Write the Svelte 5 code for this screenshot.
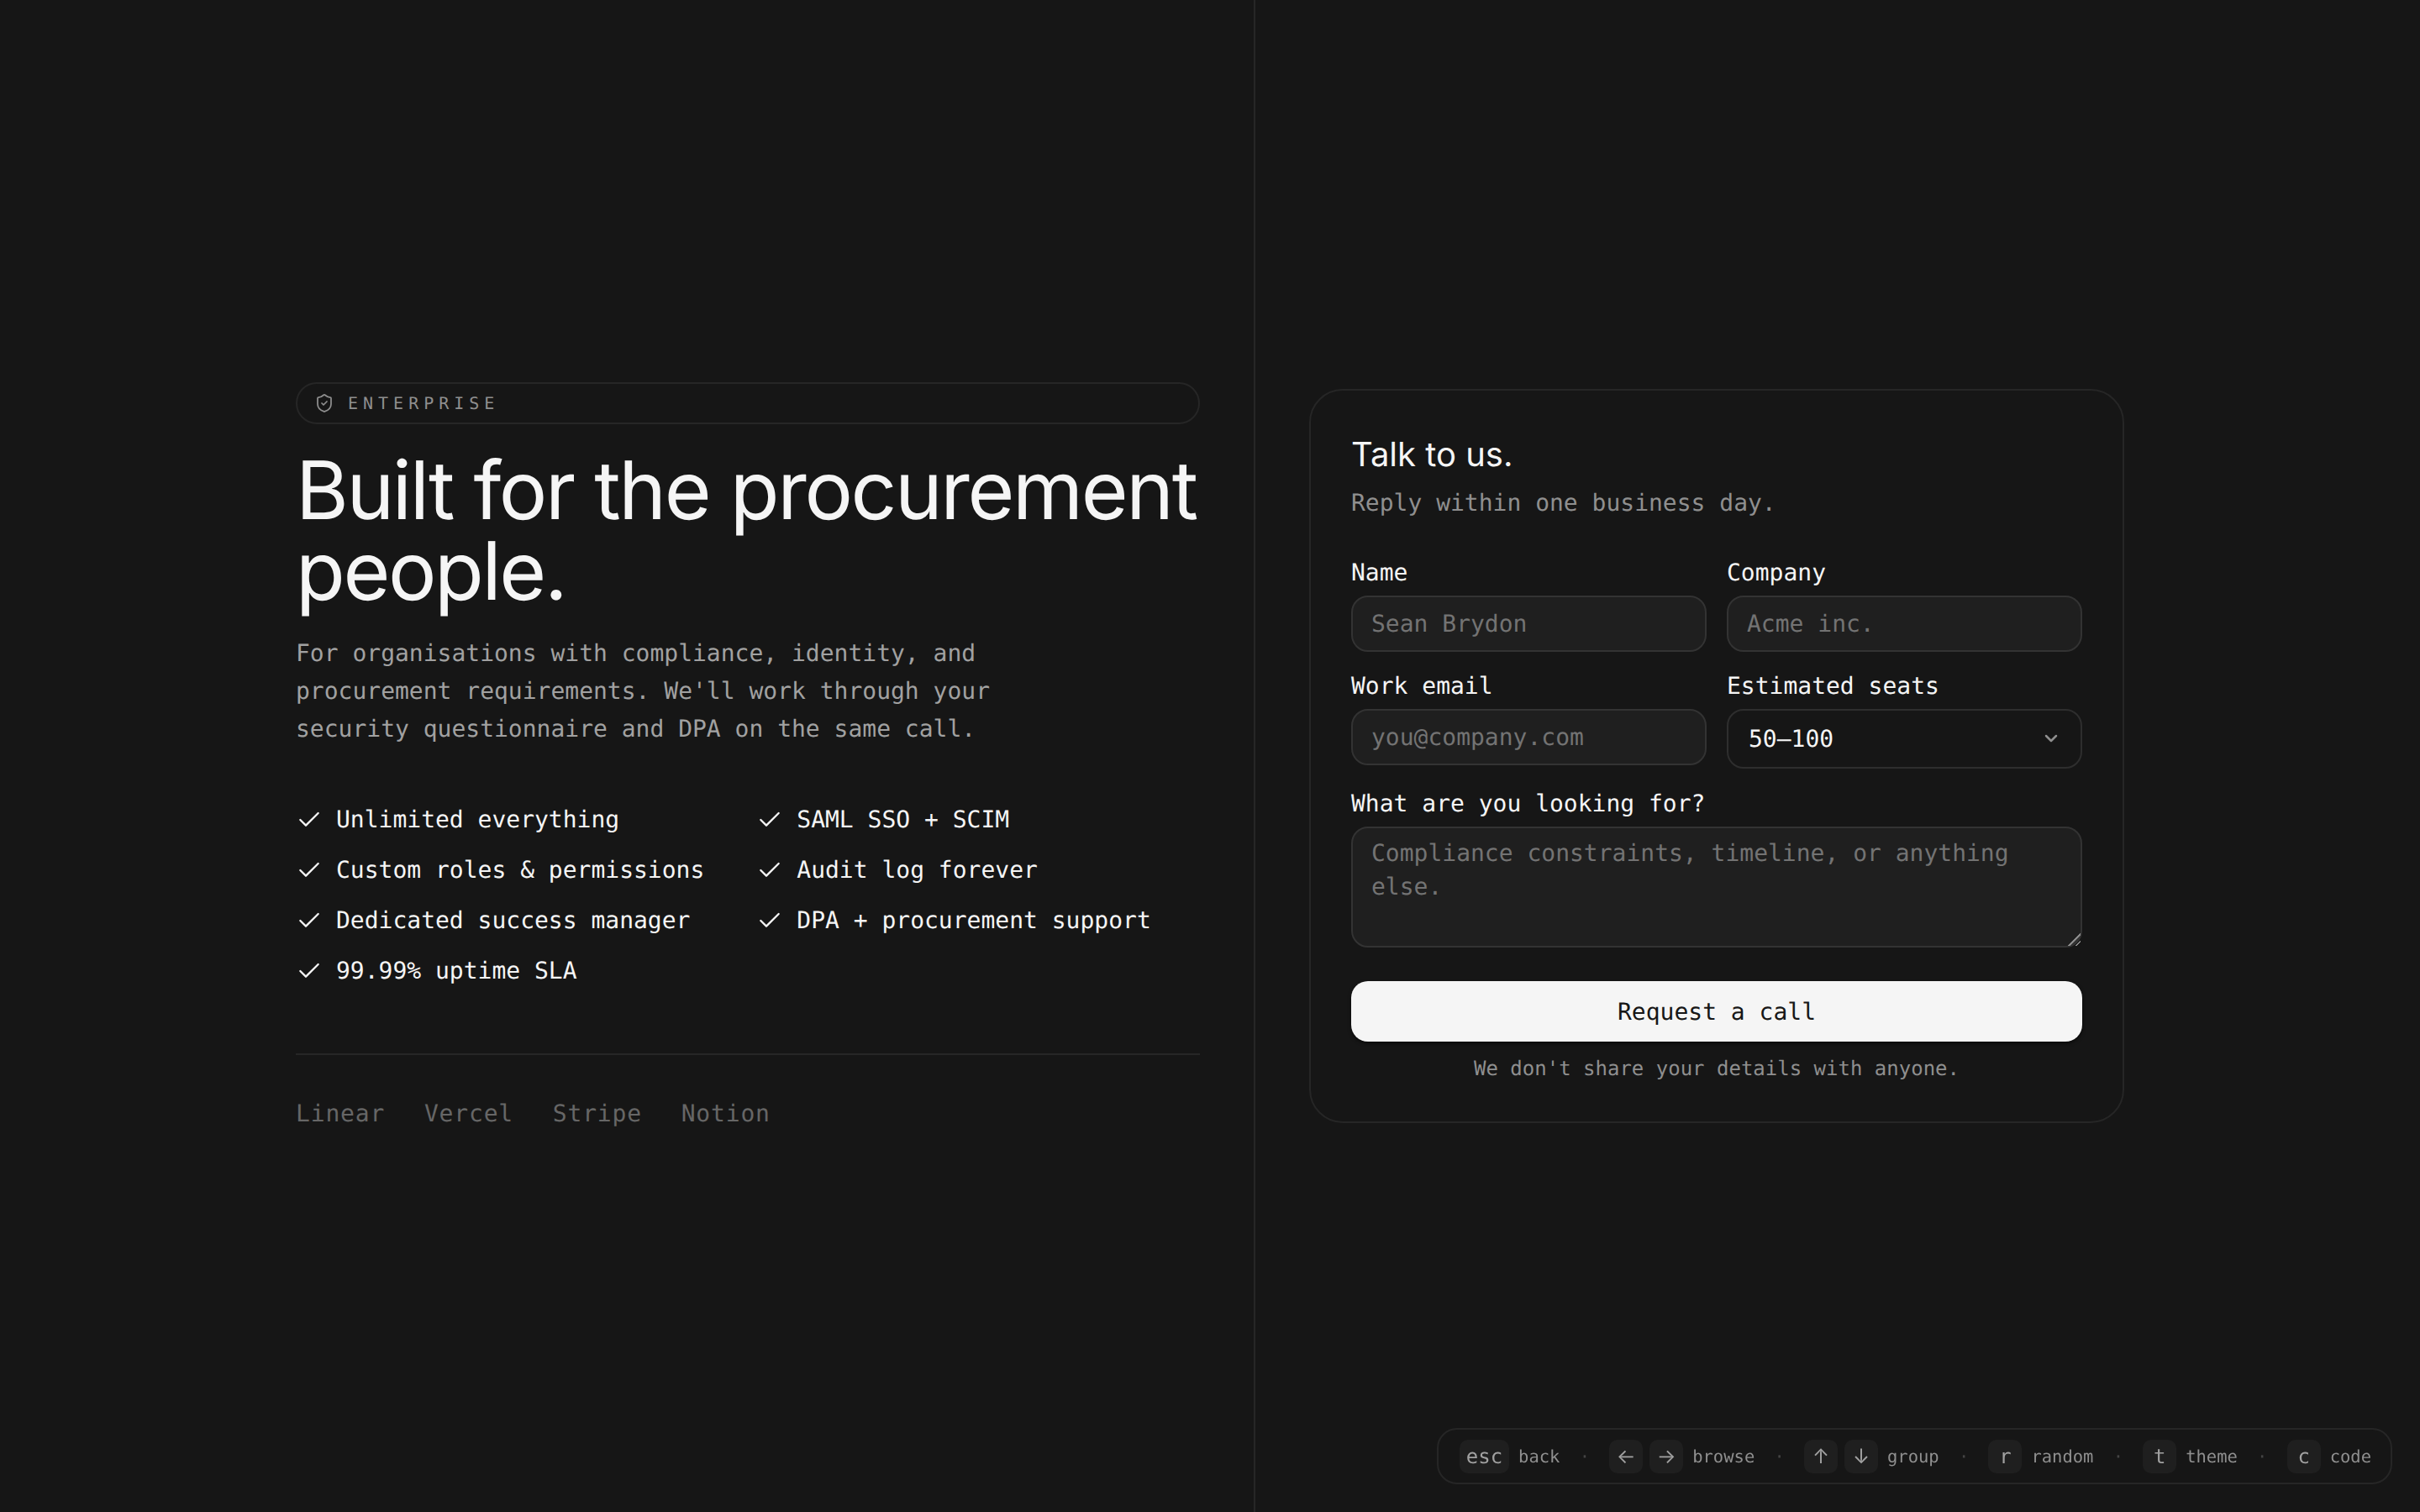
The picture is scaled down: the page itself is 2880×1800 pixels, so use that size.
<script>
  const features = [
    'Unlimited everything',
    'SAML SSO + SCIM',
    'Custom roles & permissions',
    'Audit log forever',
    'Dedicated success manager',
    'DPA + procurement support',
    '99.99% uptime SLA'
  ];

  const logos = ['Linear', 'Vercel', 'Stripe', 'Notion'];

  const hints = [
    { keys: ['esc'], label: 'back' },
    { keys: ['←', '→'], label: 'browse' },
    { keys: ['↑', '↓'], label: 'group' },
    { keys: ['r'], label: 'random' },
    { keys: ['t'], label: 'theme' },
    { keys: ['c'], label: 'code' }
  ];

  const arrows = '←→↑↓';
</script>

<main class="page">
  <section class="pitch">
    <div class="badge">
      <svg class="shield" viewBox="0 0 24 24" aria-hidden="true">
        <path d="M20 13c0 5-3.5 7.5-7.66 8.95a1 1 0 0 1-.67-.01C7.5 20.5 4 18 4 13V6a1 1 0 0 1 1-1c2 0 4.5-1.2 6.24-2.72a1.17 1.17 0 0 1 1.52 0C14.51 3.81 17 5 19 5a1 1 0 0 1 1 1z" />
        <path d="m9 12 2 2 4-4" />
      </svg>
      <span>ENTERPRISE</span>
    </div>

    <h1>Built for the procurement people.</h1>

    <p class="lede">
      For organisations with compliance, identity, and procurement requirements. We'll work through your security questionnaire and DPA on the same call.
    </p>

    <ul class="features">
      {#each features as feature}
        <li>
          <svg class="check" viewBox="0 0 24 24" aria-hidden="true">
            <path d="M20 6 9 17l-5-5" />
          </svg>
          {feature}
        </li>
      {/each}
    </ul>

    <div class="logos">
      {#each logos as logo}
        <span>{logo}</span>
      {/each}
    </div>
  </section>

  <section class="contact">
    <form class="card" onsubmit={(e) => e.preventDefault()}>
      <h2>Talk to us.</h2>
      <p class="sub">Reply within one business day.</p>

      <div class="fields">
        <label class="field">
          <span>Name</span>
          <input type="text" placeholder="Sean Brydon" />
        </label>
        <label class="field">
          <span>Company</span>
          <input type="text" placeholder="Acme inc." />
        </label>
        <label class="field">
          <span>Work email</span>
          <input type="email" placeholder="you@company.com" />
        </label>
        <label class="field">
          <span>Estimated seats</span>
          <div class="select-wrap">
            <select>
              <option>1–10</option>
              <option>10–50</option>
              <option selected>50–100</option>
              <option>100+</option>
            </select>
            <svg class="chevron" viewBox="0 0 24 24" aria-hidden="true">
              <path d="m6 9 6 6 6-6" />
            </svg>
          </div>
        </label>
        <label class="field wide">
          <span>What are you looking for?</span>
          <textarea rows="3" placeholder="Compliance constraints, timeline, or anything else."></textarea>
        </label>
      </div>

      <button type="submit">Request a call</button>
      <p class="note">We don't share your details with anyone.</p>
    </form>
  </section>
</main>

<nav class="hints">
  {#each hints as hint, i}
    {#if i > 0}<span class="dot">·</span>{/if}
    <div class="hint">
      <div class="keys">
        {#each hint.keys as key}
          <kbd class:arrow={arrows.includes(key)}>{key}</kbd>
        {/each}
      </div>
      <span>{hint.label}</span>
    </div>
  {/each}
</nav>

<style>
  :global(html) {
    color-scheme: dark;
  }

  :global(body) {
    background: #161616;
    color: #f5f5f5;
    font-family: 'DejaVu Sans Mono', monospace;
    text-rendering: geometricPrecision;
  }

  .page {
    display: grid;
    grid-template-columns: 1494px 1fr;
    height: 1800px;
  }

  .pitch {
    display: flex;
    flex-direction: column;
    justify-content: center;
    padding: 4px 64px 0 352px;
    border-right: 2px solid #262626;
  }

  .badge {
    display: flex;
    align-items: center;
    gap: 16px;
    height: 50px;
    box-sizing: border-box;
    padding: 0 20px;
    border: 2px solid #262626;
    border-radius: 999px;
    font-size: 20px;
    letter-spacing: 6px;
    color: #8f8f8f;
  }

  .shield {
    width: 24px;
    height: 24px;
    fill: none;
    stroke: #8f8f8f;
    stroke-width: 1.75;
    stroke-linecap: round;
    stroke-linejoin: round;
  }

  h1 {
    margin: 31px 0 0;
    font-family: Inter, sans-serif;
    font-size: 96px;
    font-weight: 400;
    line-height: 96px;
    letter-spacing: -2.4px;
    color: #f5f5f5;
  }

  .lede {
    margin: 28px 0 0;
    max-width: 896px;
    font-size: 28px;
    line-height: 44.8px;
    color: #a1a1a1;
  }

  .features {
    display: grid;
    grid-template-columns: auto auto;
    justify-content: start;
    column-gap: 62px;
    row-gap: 20px;
    margin: 65px 0 0;
    padding: 0;
    list-style: none;
  }

  .features li {
    display: flex;
    align-items: center;
    gap: 16px;
    height: 40px;
    font-size: 28px;
  }

  .check {
    width: 32px;
    height: 32px;
    fill: none;
    stroke: #f5f5f5;
    stroke-width: 1.75;
    stroke-linecap: round;
    stroke-linejoin: round;
  }

  .logos {
    display: flex;
    gap: 46.7px;
    margin-top: 78px;
    padding-top: 48px;
    border-top: 2px solid #262626;
    font-size: 28px;
    line-height: 44.8px;
    letter-spacing: 0.84px;
    color: #666;
  }

  .contact {
    display: flex;
    align-items: center;
    padding-left: 64px;
  }

  .card {
    width: 970px;
    box-sizing: border-box;
    padding: 48px 48px 45px;
    border: 2px solid #262626;
    border-radius: 40px;
  }

  h2 {
    margin: 0;
    font-family: Inter, sans-serif;
    font-size: 40px;
    font-weight: 400;
    line-height: 56px;
  }

  .sub {
    margin: 8px 0 0;
    font-size: 28px;
    line-height: 44px;
    color: #8f8f8f;
  }

  .fields {
    display: grid;
    grid-template-columns: 1fr 1fr;
    column-gap: 24px;
    row-gap: 21px;
    margin-top: 41px;
  }

  .field {
    display: flex;
    flex-direction: column;
    gap: 7px;
    font-size: 28px;
    line-height: 40px;
    min-width: 0;
  }

  .wide {
    grid-column: span 2;
    margin-top: 1px;
  }

  input,
  textarea,
  select,
  button {
    text-rendering: geometricPrecision;
  }

  input,
  textarea,
  select {
    box-sizing: border-box;
    width: 100%;
    border: 2px solid #333;
    border-radius: 20px;
    background: #1f1f1f;
    color: #f5f5f5;
    font-family: inherit;
    font-size: 28px;
    outline: none;
    padding: 0 22px;
  }

  input {
    height: 67px;
  }

  textarea {
    display: block;
    height: 144px;
    padding: 10px 22px;
    line-height: 40px;
  }

  textarea::-webkit-resizer {
    background: linear-gradient(
      135deg,
      transparent 50%,
      #8a8a8a 50% 58%,
      #333 58% 66%,
      transparent 66% 78%,
      #8a8a8a 78% 86%,
      transparent 86%
    );
  }

  input::placeholder,
  textarea::placeholder {
    color: #737373;
    opacity: 1;
  }

  .select-wrap {
    position: relative;
  }

  select {
    display: block;
    height: 71px;
    appearance: none;
    background: #161616;
    border-color: #2e2e2e;
    padding: 0 24px;
  }

  .chevron {
    position: absolute;
    top: 23px;
    right: 25px;
    width: 24px;
    height: 24px;
    fill: none;
    stroke: #8f8f8f;
    stroke-width: 2.5;
    stroke-linecap: round;
    stroke-linejoin: round;
    pointer-events: none;
  }

  button {
    display: block;
    width: 100%;
    height: 72px;
    margin-top: 40px;
    border: 0;
    border-radius: 20px;
    background: #f5f5f5;
    color: #171717;
    font-family: inherit;
    font-size: 28px;
    box-shadow: 0 2px 4px rgba(0, 0, 0, 0.6);
  }

  .note {
    margin: 14px 0 0;
    font-size: 24px;
    line-height: 36px;
    text-align: center;
    color: #8f8f8f;
  }

  .hints {
    position: fixed;
    right: 33px;
    bottom: 33px;
    display: flex;
    align-items: center;
    height: 67px;
    box-sizing: border-box;
    padding: 0 23px 0 25px;
    border: 2px solid #262626;
    border-radius: 24px;
    font-size: 20.5px;
    color: #8f8f8f;
  }

  .hint {
    display: flex;
    align-items: center;
    gap: 11px;
  }

  .keys {
    display: flex;
    gap: 8px;
  }

  kbd {
    display: flex;
    align-items: center;
    justify-content: center;
    min-width: 40px;
    height: 40px;
    box-sizing: border-box;
    padding: 0 8px;
    border-radius: 10px;
    background: #1f1f1f;
    color: #a1a1a1;
    font-family: inherit;
    font-size: 24px;
  }

  .arrow {
    font-family: Inter, sans-serif;
    padding: 0;
  }

  .dot {
    margin: 0 23.2px;
    color: #444;
  }
</style>
